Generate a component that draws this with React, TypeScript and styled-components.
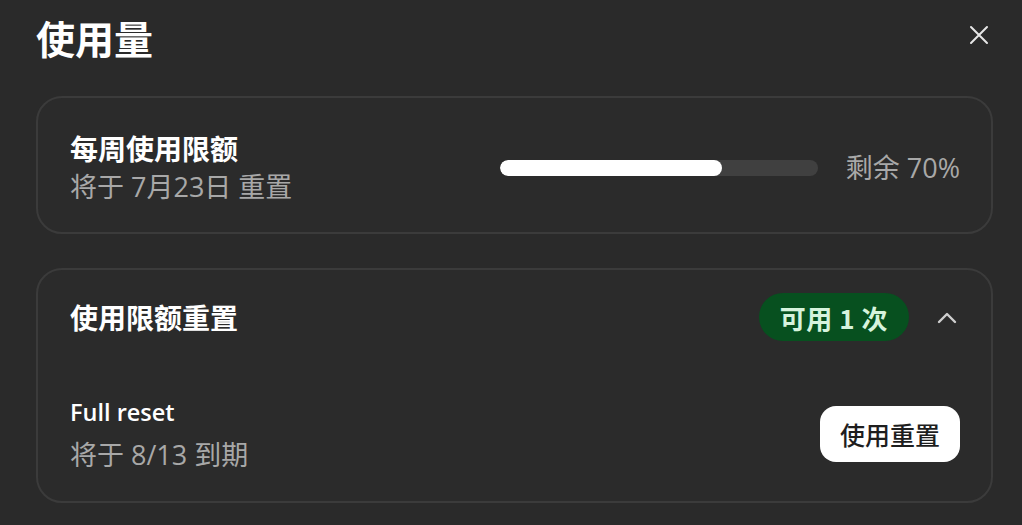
import React from "react";
import styled, { createGlobalStyle } from "styled-components";

const Global = createGlobalStyle`
  html, body { margin: 0; padding: 0; background: #2a2a2a; }
  body {
    font-family: "Open Sans", "Noto Sans CJK SC", sans-serif;
    color: #fff;
  }
`;

const Page = styled.div`
  width: 1022px;
  height: 525px;
  box-sizing: border-box;
  padding: 10px 29px 0 36px;
  display: flex;
  flex-direction: column;
  overflow: hidden;
`;

const Header = styled.div`
  display: flex;
  align-items: center;
  justify-content: space-between;
  height: 54px;
  margin-bottom: 32px;
`;

const Title = styled.h1`
  margin: 0;
  font-size: 39px;
  line-height: 54px;
  font-weight: 700;
  font-family: "Noto Sans CJK SC", sans-serif;
`;

const CloseButton = styled.button`
  width: 30px;
  height: 30px;
  margin-right: -1px;
  margin-top: -4px;
  padding: 0;
  border: none;
  background: transparent;
  color: #e6e6e6;
  display: flex;
  align-items: center;
  justify-content: center;
  cursor: pointer;
`;

const Card = styled.section<{ $pad: string; $gapBelow: number }>`
  border: 2px solid #3b3b3b;
  border-radius: 26px;
  padding: ${(p) => p.$pad};
  margin-bottom: ${(p) => p.$gapBelow}px;
  background: #2b2b2b;
`;

const Row = styled.div`
  display: flex;
  align-items: center;
`;

const Info = styled.div<{ $gap?: number }>`
  display: flex;
  flex-direction: column;
  gap: ${(p) => p.$gap ?? 1}px;
  flex: 1;
`;

const Label = styled.div`
  font-size: 28px;
  font-weight: 600;
  line-height: 38px;
  font-family: "Noto Sans CJK SC", sans-serif;
  color: #fff;
`;

const LatinLabel = styled(Label)`
  font-family: "Open Sans", "Noto Sans CJK SC", sans-serif;
  font-size: 23.5px;
`;

const Sub = styled.div`
  font-size: 27px;
  line-height: 38px;
  color: #a8a8a8;
  font-family: "Open Sans", "Noto Sans CJK SC", sans-serif;
`;

const Track = styled.div`
  width: 318px;
  height: 16px;
  border-radius: 8px;
  background: #404040;
  overflow: hidden;
  margin-right: 28px;
`;

const Fill = styled.div`
  height: 100%;
  border-radius: 8px;
  background: #fff;
`;

const Remain = styled.div`
  font-size: 27px;
  line-height: 38px;
  color: #a8a8a8;
  font-family: "Open Sans", "Noto Sans CJK SC", sans-serif;
`;

const Badge = styled.span`
  height: 48px;
  padding: 0 21px;
  border-radius: 24px;
  background: #07501f;
  color: #d6f3dd;
  font-size: 26px;
  font-weight: 700;
  font-family: "Noto Sans CJK SC", sans-serif;
  display: inline-flex;
  align-items: center;
  letter-spacing: 0.5px;
`;

const Toggle = styled.button`
  width: 40px;
  height: 40px;
  margin-left: 18px;
  margin-right: -7px;
  padding: 0;
  border: none;
  background: transparent;
  color: #cfcfcf;
  display: flex;
  align-items: center;
  justify-content: center;
`;

const ResetItem = styled(Row)`
  margin-top: 52px;
`;

const ActionButton = styled.button`
  height: 56px;
  padding: 0 20px;
  border: none;
  border-radius: 16px;
  background: #fff;
  color: #1e1e1e;
  font-size: 25px;
  font-family: "Noto Sans CJK SC", sans-serif;
  font-weight: 500;
  cursor: pointer;
`;

const percent = 70;

export default function App() {
  return (
    <>
      <Global />
      <Page>
        <Header>
          <Title>使用量</Title>
          <CloseButton aria-label="关闭">
            <svg width="20" height="20" viewBox="0 0 20 20" fill="none">
              <path d="M2 2 L18 18 M18 2 L2 18" stroke="currentColor" strokeWidth="2" strokeLinecap="round" />
            </svg>
          </CloseButton>
        </Header>

        <Card $pad="31px 31px 26px 32px" $gapBelow={34}>
          <Row>
            <Info>
              <Label>每周使用限额</Label>
              <Sub>将于 7月23日 重置</Sub>
            </Info>
            <Track>
              <Fill style={{ width: `${percent}%` }} />
            </Track>
            <Remain>剩余 {percent}%</Remain>
          </Row>
        </Card>

        <Card $pad="23px 31px 27px 32px" $gapBelow={0}>
          <Row>
            <Info>
              <Label>使用限额重置</Label>
            </Info>
            <Badge>可用 1 次</Badge>
            <Toggle aria-label="收起">
              <svg width="20" height="13" viewBox="0 0 20 13" fill="none">
                <path d="M2 11 L10 3 L18 11" stroke="currentColor" strokeWidth="2.4" strokeLinecap="round" strokeLinejoin="round" />
              </svg>
            </Toggle>
          </Row>
          <ResetItem>
            <Info $gap={5}>
              <LatinLabel>Full reset</LatinLabel>
              <Sub>将于 8/13 到期</Sub>
            </Info>
            <ActionButton>使用重置</ActionButton>
          </ResetItem>
        </Card>
      </Page>
    </>
  );
}
